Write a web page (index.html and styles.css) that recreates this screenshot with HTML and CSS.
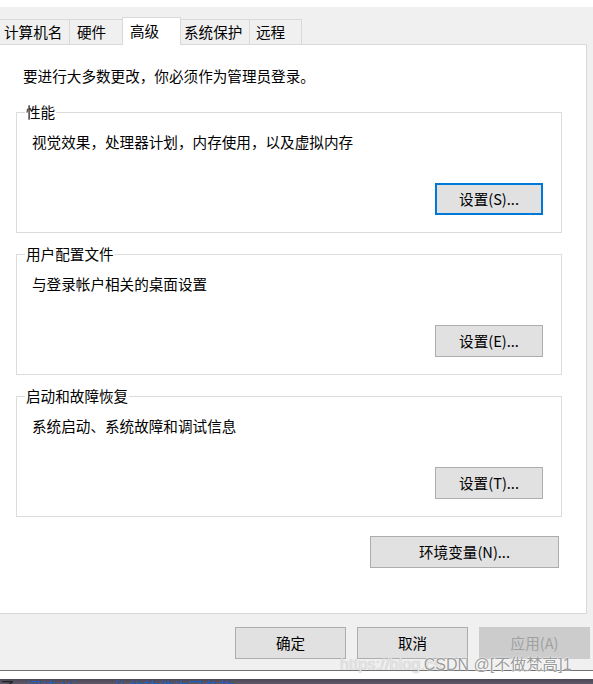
FILE: index.html
```html
<!DOCTYPE html>
<html lang="zh-CN">
<head>
<meta charset="utf-8">
<title>系统属性 - 高级</title>
<link rel="stylesheet" href="styles.css">
</head>
<body>
<div class="window">
  <div class="topstrip"></div>
  <div class="tabbar">
    <div class="tab t1">计算机名</div>
    <div class="tab t2">硬件</div>
    <div class="tab active">高级</div>
    <div class="tab t4">系统保护</div>
    <div class="tab t5">远程</div>
  </div>
  <div class="panel">
    <p class="note">要进行大多数更改，你必须作为管理员登录。</p>
    <fieldset class="group first">
      <legend>性能</legend>
      <p class="desc">视觉效果，处理器计划，内存使用，以及虚拟内存</p>
      <div class="btnrow"><button class="btn focus">设置(S)...</button></div>
    </fieldset>
    <fieldset class="group">
      <legend>用户配置文件</legend>
      <p class="desc">与登录帐户相关的桌面设置</p>
      <div class="btnrow"><button class="btn">设置(E)...</button></div>
    </fieldset>
    <fieldset class="group">
      <legend>启动和故障恢复</legend>
      <p class="desc">系统启动、系统故障和调试信息</p>
      <div class="btnrow"><button class="btn">设置(T)...</button></div>
    </fieldset>
    <div class="envrow"><button class="btn env">环境变量(N)...</button></div>
  </div>
  <div class="footer">
    <button class="btn fbtn">确定</button>
    <button class="btn fbtn">取消</button>
    <button class="btn fbtn disabled">应用(A)</button>
  </div>
  <div class="taskstrip">
    <span class="ts-dark">子</span><span class="ts-link">阅读 Microsoft 的软件许可条款</span>
  </div>
  <div class="watermark"><span class="wm-url">https://blog.cs</span><span class="wm-name">CSDN @[不做梵高]1</span></div>
</div>
</body>
</html>
```

FILE: styles.css
```css
html, body {
  margin: 0;
  padding: 0;
}
body {
  background: #f0f0f0;
  font-family: "Noto Sans CJK SC", "Noto Sans", sans-serif;
  font-size: 14.6px;
  color: #000;
}
.window {
  position: relative;
  width: 593px;
  height: 684px;
  overflow: hidden;
  background: #f0f0f0;
}
.topstrip {
  height: 7px;
  background: #ffffff;
}
.tabbar {
  display: flex;
  align-items: flex-end;
  height: 37px;
}
.tab {
  box-sizing: border-box;
  height: 25px;
  border-top: 1px solid #d9d9d9;
  border-right: 1px solid #d9d9d9;
  background: #f0f0f0;
  padding-top: 2px;
  line-height: 20px;
  white-space: nowrap;
}
.t1 { width: 70px; padding-left: 4px; }
.t2 { width: 52px; padding-left: 7px; border-right: none; }
.tab.active {
  position: relative;
  z-index: 2;
  width: 59px;
  height: 28px;
  margin-bottom: -1px;
  background: #ffffff;
  border-left: 1px solid #d9d9d9;
  padding-left: 7px;
  padding-top: 3px;
}
.t4 { width: 69px; padding-left: 3px; }
.t5 { width: 52px; padding-left: 6px; }

.panel {
  box-sizing: border-box;
  width: 587px;
  height: 570px;
  background: #ffffff;
  border-top: 1px solid #d9d9d9;
  border-right: 1px solid #d9d9d9;
  border-bottom: 1px solid #d9d9d9;
  padding-top: 21px;
}
.note {
  margin: 0 0 0 23px;
  line-height: 20px;
}
.group {
  box-sizing: border-box;
  width: 546px;
  margin: 12px 0 0 16px;
  padding: 0 18px 17px 8px;
  border: 1px solid #dcdcdc;
  min-inline-size: 0;
}
.group.first {
  margin-top: 17px;
}
.group legend {
  padding: 0 1px;
  line-height: 18px;
}
.desc {
  margin: 11px 0 0 7px;
  line-height: 20px;
}
.btnrow {
  display: flex;
  justify-content: flex-end;
  margin-top: 31px;
}
.btn {
  box-sizing: border-box;
  height: 32px;
  width: 108px;
  margin: 0;
  padding: 0;
  background: #e1e1e1;
  border: 1px solid #adadad;
  font-family: "Noto Sans CJK SC", "Noto Sans", sans-serif;
  font-size: 14.6px;
  color: #000;
  line-height: 20px;
}
.btn.focus {
  border: 2px solid #0078d7;
}
.envrow {
  margin-top: 19px;
  padding-left: 370px;
}
.btn.env {
  width: 189px;
}
.footer {
  display: flex;
  gap: 11px;
  height: 56px;
  box-sizing: border-box;
  padding: 13px 0 0 235px;
}
.btn.fbtn {
  width: 111px;
}
.btn.disabled {
  background: #cccccc;
  border-color: #cccccc;
  color: #a0a0a0;
}
.taskstrip {
  box-sizing: border-box;
  height: 14px;
  border-top: 1px solid #6e6e6e;
  background: linear-gradient(to bottom, #ffffff 0, #ffffff 8px, #4e4656 8px, #5c5a6a 100%);
  overflow: hidden;
  white-space: nowrap;
  font-size: 15px;
  line-height: 20px;
  padding-top: 6px;
}
.ts-dark {
  color: #222;
  margin-right: 12px;
}
.ts-link {
  color: #1f5fbf;
}
.watermark {
  position: absolute;
  left: 340px;
  top: 655px;
  font-family: "Liberation Sans", "Noto Sans CJK SC", sans-serif;
  font-size: 16px;
  line-height: 20px;
  white-space: nowrap;
  z-index: 5;
}
.wm-url {
  color: rgba(235, 235, 235, 0.9);
  text-shadow: 0 0 1px #b0b0b0;
  letter-spacing: 0.2px;
}
.wm-name {
  margin-left: -18px;
  color: #9c9c9c;
  text-shadow: 0 0 1px #ffffff, 0 0 2px #ffffff;
}
```
